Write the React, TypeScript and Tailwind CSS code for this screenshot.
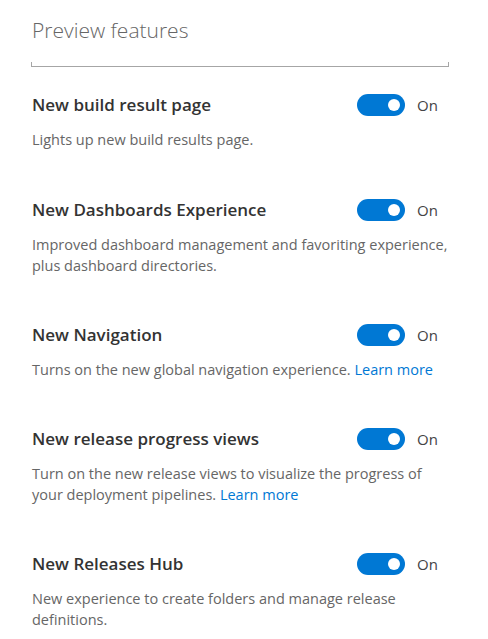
import React from "react";

type Feature = {
  title: string;
  desc: string;
  link?: boolean;
};

const features: Feature[] = [
  { title: "New build result page", desc: "Lights up new build results page." },
  {
    title: "New Dashboards Experience",
    desc: "Improved dashboard management and favoriting experience, plus dashboard directories.",
  },
  { title: "New Navigation", desc: "Turns on the new global navigation experience.", link: true },
  {
    title: "New release progress views",
    desc: "Turn on the new release views to visualize the progress of your deployment pipelines.",
    link: true,
  },
  {
    title: "New Releases Hub",
    desc: "New experience to create folders and manage release definitions.",
  },
];

function Toggle() {
  return (
    <div className="flex items-center">
      <div className="flex h-[22px] w-[48px] items-center justify-end rounded-full bg-[#0078d4] pr-[5px]">
        <div className="h-[12px] w-[12px] rounded-full bg-white" />
      </div>
      <span className="ml-[12px] text-[15px] text-[#444444]">On</span>
    </div>
  );
}

export default function App() {
  return (
    <div
      className="min-h-screen w-[488px] bg-white pl-[32px] pr-[39px]"
      style={{ fontFamily: '"Open Sans", "Noto Sans", sans-serif' }}
    >
      <h1 className="pt-[14px] text-[21px] font-light leading-[32px] text-[#666666]">
        Preview features
      </h1>
      <div className="-ml-[1px] mt-[16px] h-[5px] border-x border-b border-t-0 border-[#a6a6a6]" />
      <div className="flex flex-col">
        {features.map((f, i) => (
          <div
            key={i}
            className={i === 0 ? "mt-[26px]" : i === 1 ? "mt-[48px]" : "mt-[47px]"}
          >
            <div className="flex items-center">
              <div className="w-[325px] text-[17px] font-semibold leading-[24px] text-[#333333]">
                {f.title}
              </div>
              <Toggle />
            </div>
            <p className="mt-[12px] text-[14.5px] leading-[21px] text-[#666666]">
              {f.desc}
              {f.link && (
                <>
                  {" "}
                  <a className="text-[#0078d4]">Learn more</a>
                </>
              )}
            </p>
          </div>
        ))}
      </div>
    </div>
  );
}
